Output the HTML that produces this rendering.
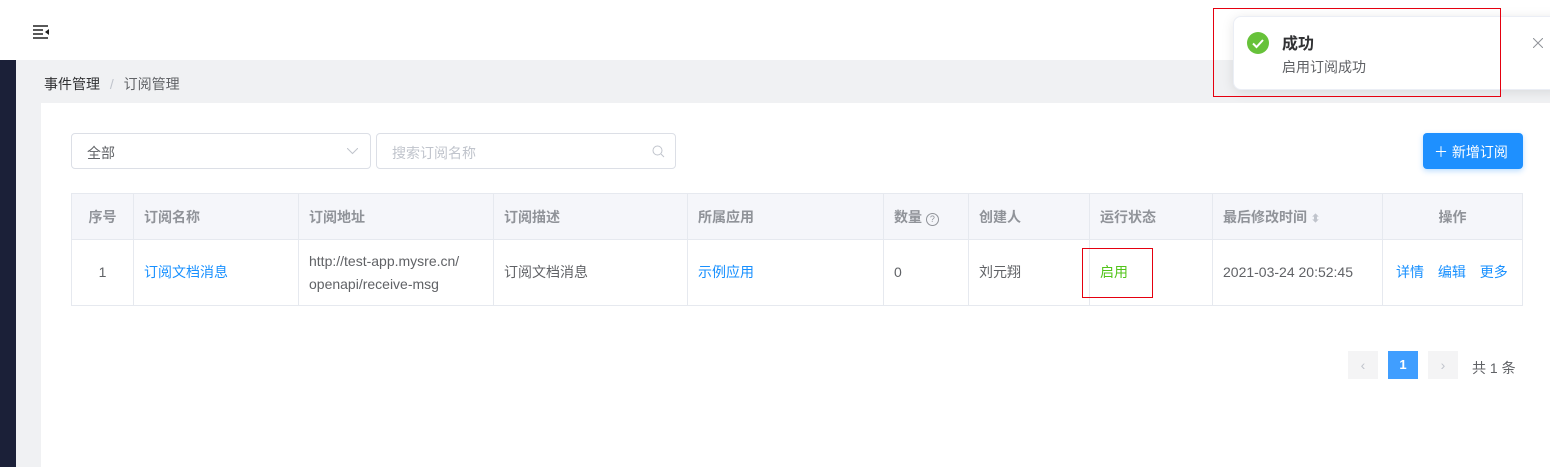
<!DOCTYPE html>
<html><head><meta charset="utf-8"><style>
*{margin:0;padding:0;box-sizing:border-box}
body{width:1550px;height:467px;position:relative;overflow:hidden;background:#fff;font-family:"Liberation Sans","Noto Sans CJK SC",sans-serif;font-size:14px;color:#606266}
.a{position:absolute}
table{position:absolute;left:71px;top:193px;width:1451px;border-collapse:collapse;table-layout:fixed}
td,th{border:1px solid #e6e9ef;padding:0 10px;text-align:left;font-weight:normal;vertical-align:middle}
th{height:46px;background:#f5f6fa;color:#909399;font-weight:bold}
td{height:66px;line-height:23px}
.c{text-align:center}
.blue{color:#1890ff}
</style></head><body>
<div class="a" style="left:0;top:0;width:1550px;height:60px;background:#fff"></div>
<svg class="a" style="left:33px;top:25px" width="17" height="14" viewBox="0 0 17 14"><path d="M0 1h15M0 5h10M0 9h10M0 13h15" stroke="#222" stroke-width="1.6"/><path d="M16 4v6l-4-3z" fill="#222"/></svg>
<div class="a" style="left:0;top:60px;width:16px;height:407px;background:#1b2038"></div>
<div class="a" style="left:16px;top:60px;width:1534px;height:407px;background:#f0f1f3"></div>
<div class="a" style="left:44px;top:74px;font-size:14px;color:#303133">事件管理 <span style="color:#c0c4cc;margin:0 6px">/</span> <span style="color:#606266">订阅管理</span></div>
<div class="a" style="left:41px;top:103px;width:1509px;height:364px;background:#fff"></div>
<div class="a" style="left:71px;top:133px;width:300px;height:36px;border:1px solid #dcdfe6;border-radius:4px;padding:9px 15px;color:#606266">全部<svg class="a" style="right:12px;top:14px" width="11" height="7"><path d="M0 0l5.5 5.5L11 0" stroke="#c0c4cc" fill="none"/></svg></div>
<div class="a" style="left:376px;top:133px;width:300px;height:36px;border:1px solid #dcdfe6;border-radius:4px;padding:9px 15px;color:#c0c4cc">搜索订阅名称<svg class="a" style="right:10px;top:11px" width="13" height="13"><circle cx="5.5" cy="5.5" r="4.5" stroke="#c0c4cc" fill="none"/><path d="M9 9l3 3" stroke="#c0c4cc"/></svg></div>
<div class="a" style="left:1423px;top:133px;width:100px;height:36px;background:#1e90ff;border-radius:4px;color:#fff;padding:9px 0 0 11px;box-shadow:0 2px 6px rgba(30,144,255,.3)">＋ 新增订阅</div>
<table>
<colgroup><col style="width:62px"><col style="width:165px"><col style="width:195px"><col style="width:194px"><col style="width:196px"><col style="width:85px"><col style="width:121px"><col style="width:123px"><col style="width:170px"><col style="width:140px"></colgroup>
<tr><th class="c">序号</th><th>订阅名称</th><th>订阅地址</th><th>订阅描述</th><th>所属应用</th><th>数量 <span style="display:inline-block;width:13px;height:13px;border:1px solid #909399;border-radius:50%;font-size:9px;line-height:11px;text-align:center;font-weight:normal">?</span></th><th>创建人</th><th>运行状态</th><th>最后修改时间 <span style="font-size:11px;color:#c0c4cc">⬍</span></th><th class="c">操作</th></tr>
<tr><td class="c">1</td><td class="blue">订阅文档消息</td><td>http://test-app.mysre.cn/<br>openapi/receive-msg</td><td>订阅文档消息</td><td class="blue">示例应用</td><td>0</td><td>刘元翔</td><td style="color:#52c41a">启用</td><td>2021-03-24 20:52:45</td><td class="blue" style="padding-left:13px;word-spacing:10px">详情 编辑 更多</td></tr>
</table>
<div class="a" style="left:1082px;top:248px;width:71px;height:50px;border:1px solid #e5000f"></div>
<div class="a" style="left:1348px;top:351px;width:30px;height:28px;background:#f4f4f5;color:#c0c4cc;text-align:center;line-height:28px">‹</div>
<div class="a" style="left:1388px;top:351px;width:30px;height:28px;background:#409eff;color:#fff;text-align:center;line-height:28px;font-weight:bold;font-size:13px">1</div>
<div class="a" style="left:1428px;top:351px;width:30px;height:28px;background:#f4f4f5;color:#c0c4cc;text-align:center;line-height:28px">›</div>
<div class="a" style="left:1472px;top:358px;color:#606266">共 1 条</div>
<div class="a" style="left:1233px;top:16px;width:330px;height:74px;background:#fff;border:1px solid #ebeef5;border-radius:8px;box-shadow:0 2px 12px rgba(0,0,0,.1)"></div>
<svg class="a" style="left:1247px;top:32px" width="22" height="22"><circle cx="11" cy="11" r="11" fill="#67c23a"/><path d="M6 11.5l3.5 3.5L16 8" stroke="#fff" stroke-width="2" fill="none"/></svg>
<div class="a" style="left:1282px;top:30px;font-size:16px;font-weight:bold;color:#303133">成功</div>
<div class="a" style="left:1282px;top:57px;color:#606266">启用订阅成功</div>
<svg class="a" style="left:1533px;top:38px" width="10" height="10"><path d="M0 0l10 10M10 0L0 10" stroke="#909399"/></svg>
<div class="a" style="left:1213px;top:8px;width:288px;height:89px;border:1px solid #e5000f"></div>
</body></html>
